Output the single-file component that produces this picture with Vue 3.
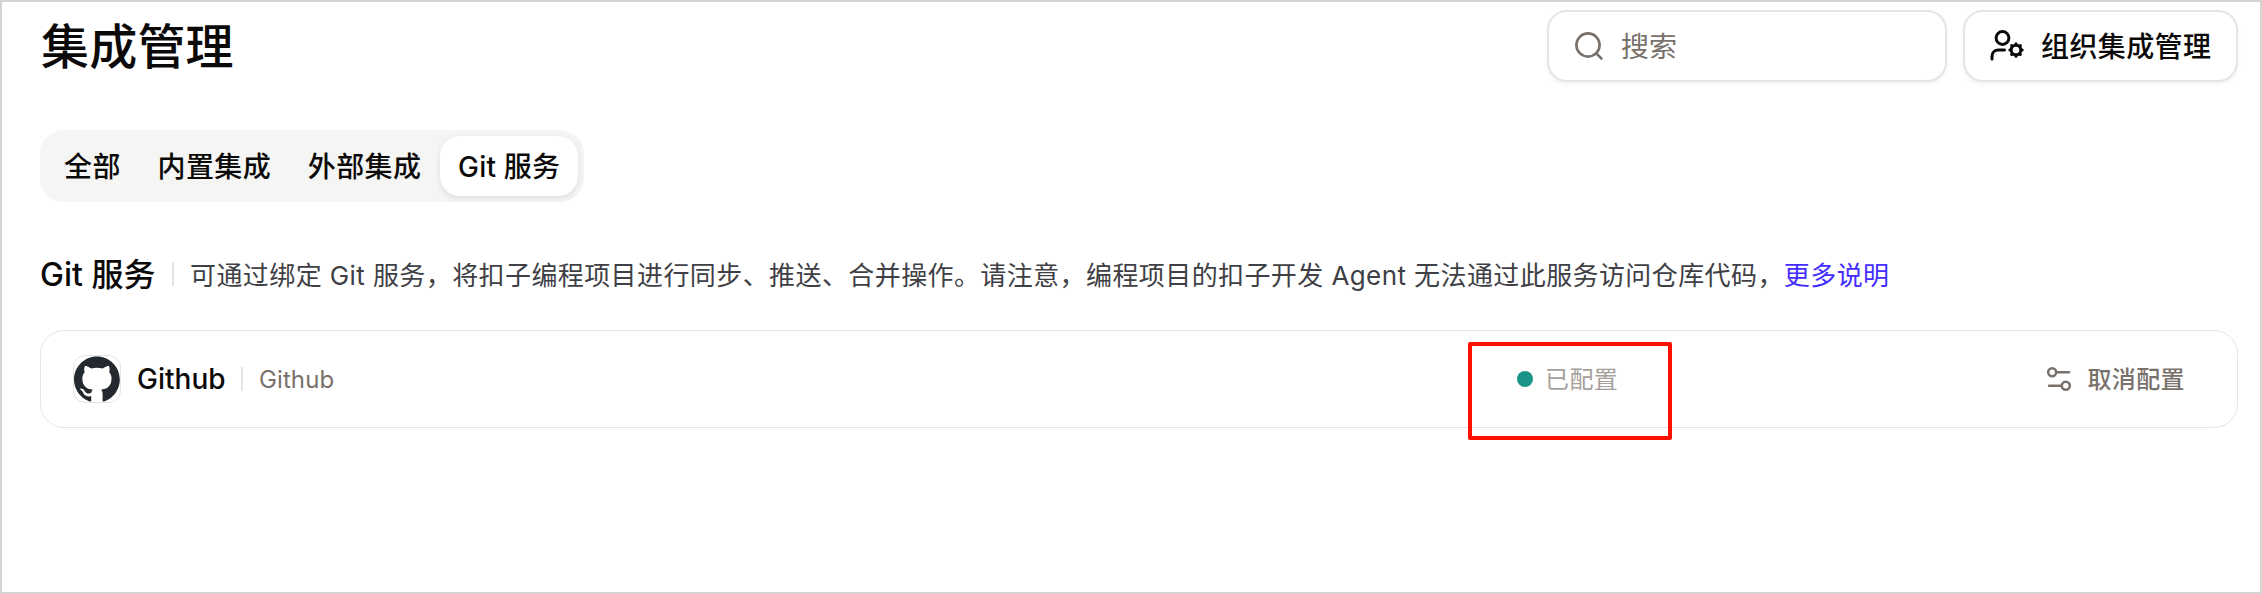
<template>
  <div class="integration-page">
    <!-- Page header -->
    <header class="page-header">
      <h1>集成管理</h1>
      <div class="header-actions">
        <label class="search-box">
          <svg class="search-icon" viewBox="0 0 28 28" fill="none">
            <circle cx="13" cy="13" r="11.6" stroke="currentColor" stroke-width="2.6" />
            <path d="M21.3 21.3 26.4 26.6" stroke="currentColor" stroke-width="2.6" stroke-linecap="round" />
          </svg>
          <input v-model="keyword" type="text" placeholder="搜索" />
        </label>
        <button class="org-btn">
          <svg class="org-icon" viewBox="0 0 34 32" fill="none" stroke="currentColor">
            <circle cx="12.5" cy="8" r="6.4" stroke-width="3" />
            <path d="M2 29v-2.5c0-4 2.6-6.5 6.5-6.5h6" stroke-width="3" stroke-linecap="round" />
            <circle cx="26" cy="20" r="4.8" stroke-width="3" />
            <path
              v-for="angle in gearAngles"
              :key="angle"
              d="M26 14.6v-0.8"
              stroke-width="3"
              stroke-linecap="round"
              :transform="`rotate(${angle} 26 20)`"
            />
          </svg>
          <span>组织集成管理</span>
        </button>
      </div>
    </header>

    <!-- Tabs -->
    <nav class="tabs">
      <button
        v-for="tab in tabs"
        :key="tab.key"
        :class="['tab', { active: tab.key === activeTab }]"
        @click="activeTab = tab.key"
      >
        {{ tab.label }}
      </button>
    </nav>

    <!-- Git services -->
    <section class="service-section">
      <div class="section-header">
        <h2>Git 服务</h2>
        <span class="divider"></span>
        <p>
          可通过绑定 Git 服务，将扣子编程项目进行同步、推送、合并操作。请注意，编程项目的扣子开发 Agent 无法通过此服务访问仓库代码，<a href="#" @click.prevent>更多说明</a>
        </p>
      </div>

      <div v-for="service in services" :key="service.name" class="service-card">
        <div class="service-info">
          <div class="service-logo">
            <svg viewBox="0 0 98 96">
              <path
                fill="#24292f"
                fill-rule="evenodd"
                clip-rule="evenodd"
                d="M48.854 0C21.839 0 0 22 0 49.217c0 21.756 13.993 40.172 33.405 46.69 2.427.49 3.316-1.059 3.316-2.362 0-1.141-.08-5.052-.08-9.127-13.59 2.934-16.42-5.867-16.42-5.867-2.184-5.704-5.42-7.17-5.42-7.17-4.448-3.015.324-3.015.324-3.015 4.934.326 7.523 5.052 7.523 5.052 4.367 7.496 11.404 5.378 14.235 4.074.404-3.178 1.699-5.378 3.074-6.6-10.839-1.141-22.243-5.378-22.243-24.283 0-5.378 1.94-9.778 5.014-13.2-.485-1.222-2.184-6.275.486-13.038 0 0 4.125-1.304 13.426 5.052a46.97 46.97 0 0 1 12.214-1.63c4.125 0 8.33.571 12.213 1.63 9.302-6.356 13.427-5.052 13.427-5.052 2.67 6.763.97 11.816.485 13.038 3.155 3.422 5.015 7.822 5.015 13.2 0 18.905-11.404 23.06-22.324 24.283 1.78 1.548 3.316 4.481 3.316 9.126 0 6.6-.08 11.897-.08 13.526 0 1.304.89 2.853 3.316 2.364 19.412-6.52 33.405-24.935 33.405-46.691C97.707 22 75.788 0 48.854 0z"
              />
            </svg>
          </div>
          <span class="service-name">{{ service.name }}</span>
          <span class="divider"></span>
          <span class="service-desc">{{ service.desc }}</span>
        </div>
        <div class="service-status">
          <span class="status-dot"></span>
          <span class="status-text">{{ service.status }}</span>
          <span class="status-highlight"></span>
        </div>
        <button class="config-btn">
          <svg viewBox="0 0 24 24" fill="none" stroke="currentColor" stroke-width="2.5">
            <circle cx="5.2" cy="5.3" r="4" />
            <path d="M9.2 5.3H22" stroke-linecap="round" />
            <circle cx="18.8" cy="18.7" r="4" />
            <path d="M2 18.7h12.8" stroke-linecap="round" />
          </svg>
          <span>取消配置</span>
        </button>
      </div>
    </section>
  </div>
</template>

<script setup>
import { ref } from 'vue'

// State
const keyword = ref('')
const activeTab = ref('git')

const tabs = [
  { key: 'all', label: '全部' },
  { key: 'builtin', label: '内置集成' },
  { key: 'external', label: '外部集成' },
  { key: 'git', label: 'Git 服务' }
]

const services = ref([
  { name: 'Github', desc: 'Github', status: '已配置' }
])

// Teeth of the gear in the organization icon
const gearAngles = [0, 45, 90, 135, 180, 225, 270, 315]
</script>

<style>
body {
  background: #fff;
}
</style>

<style scoped>
.integration-page {
  box-sizing: border-box;
  width: 100%;
  height: 594px;
  padding: 8px 22px 0 38px;
  border: 2px solid #d4d4d4;
  background: #fff;
  color: #0c0a09;
  font-family: Inter, "Noto Sans CJK SC", sans-serif;
  overflow: hidden;
}

button {
  margin: 0;
  border: none;
  background: none;
  color: inherit;
  font-family: inherit;
  cursor: pointer;
}

.page-header {
  display: flex;
  justify-content: space-between;
  height: 72px;
}

h1 {
  margin: 0;
  padding-left: 1px;
  font-size: 48px;
  font-weight: 500;
  line-height: 74px;
  letter-spacing: 0.2px;
}

.header-actions {
  display: flex;
  gap: 16px;
}

.search-box,
.org-btn {
  box-sizing: border-box;
  display: flex;
  align-items: center;
  height: 72px;
  border: 2px solid #e5e5e5;
  border-radius: 20px;
  background: #fff;
  box-shadow: 0 2px 4px rgba(0, 0, 0, 0.05);
  font-size: 28px;
}

.search-box {
  width: 400px;
  padding: 0 26px;
  color: #79716b;
}

.search-icon {
  width: 28px;
  height: 28px;
  flex-shrink: 0;
}

.search-box input {
  min-width: 0;
  flex: 1;
  margin-left: 18px;
  padding: 2px 0 0;
  border: none;
  outline: none;
  background: none;
  color: #0c0a09;
  font: inherit;
}

.search-box input::placeholder {
  color: #79716b;
  opacity: 1;
}

.org-btn {
  width: 275px;
  padding: 0 0 0 25px;
  font-weight: 500;
  letter-spacing: 0.4px;
  white-space: nowrap;
}

.org-btn span {
  margin-top: -2px;
}

.org-icon {
  width: 34px;
  height: 32px;
  margin-right: 17px;
  flex-shrink: 0;
}

.tabs {
  box-sizing: border-box;
  display: flex;
  gap: 0.7px;
  width: 544px;
  height: 72px;
  margin-top: 48px;
  padding: 6px;
  border-radius: 24px;
  background: #f5f5f4;
}

.tab {
  height: 60px;
  padding: 1px 18px 0;
  border-radius: 20px;
  font-size: 28px;
  font-weight: 500;
  line-height: 60px;
  letter-spacing: 0.4px;
  white-space: nowrap;
}

.tab.active {
  background: #fff;
  box-shadow: 0 2px 6px rgba(0, 0, 0, 0.1);
  letter-spacing: 0.2px;
}

.section-header {
  display: flex;
  align-items: center;
  height: 48px;
  margin-top: 48px;
}

h2 {
  width: 115px;
  margin: 1px 17px 0 0;
  font-size: 32px;
  font-weight: 500;
  line-height: 48px;
  white-space: nowrap;
}

.divider {
  width: 2px;
  height: 24px;
  background: #e7e5e4;
}

.section-header p {
  margin: -1px 0 0 16px;
  color: #3f3f46;
  font-size: 26px;
  letter-spacing: 0.41px;
  white-space: nowrap;
}

.section-header a {
  color: #432dff;
  text-decoration: none;
}

.service-card {
  box-sizing: border-box;
  display: flex;
  align-items: center;
  height: 98px;
  margin-top: 32px;
  padding: 0 32px;
  border: 1px solid #e5e5e5;
  border-radius: 24px;
}

.service-info {
  display: flex;
  align-items: center;
  width: 1444px;
}

.service-logo {
  box-sizing: border-box;
  width: 48px;
  height: 48px;
  margin-right: 16px;
  border: 1px solid #e5e5e5;
  border-radius: 12px;
  overflow: hidden;
}

.service-logo svg {
  display: block;
  width: 46px;
  height: 46px;
}

.service-name {
  width: 88px;
  margin-right: 16px;
  font-size: 28px;
  font-weight: 500;
}

.service-desc {
  margin-left: 16px;
  color: #79716b;
  font-size: 24px;
  letter-spacing: 0.1px;
}

.service-status {
  position: relative;
  display: flex;
  align-items: center;
  gap: 12px;
  color: #a6a09b;
  font-size: 24px;
}

.status-dot {
  width: 16px;
  height: 16px;
  border-radius: 50%;
  background: #1b9488;
}

.status-text {
  margin-top: -3px;
  letter-spacing: 0.4px;
}

/* Red frame laid over the status cell */
.status-highlight {
  position: absolute;
  top: 50%;
  left: -49px;
  box-sizing: border-box;
  width: 204px;
  height: 98px;
  margin-top: -37px;
  border: 4px solid #ff0f00;
  border-radius: 2px;
}

.config-btn {
  display: flex;
  align-items: center;
  gap: 16px;
  margin-left: auto;
  padding: 0 20px;
  color: #79716b;
  font-size: 24px;
  font-weight: 500;
  letter-spacing: 0.4px;
}

.config-btn span {
  margin-top: -3px;
}

.config-btn svg {
  width: 24px;
  height: 24px;
}
</style>
